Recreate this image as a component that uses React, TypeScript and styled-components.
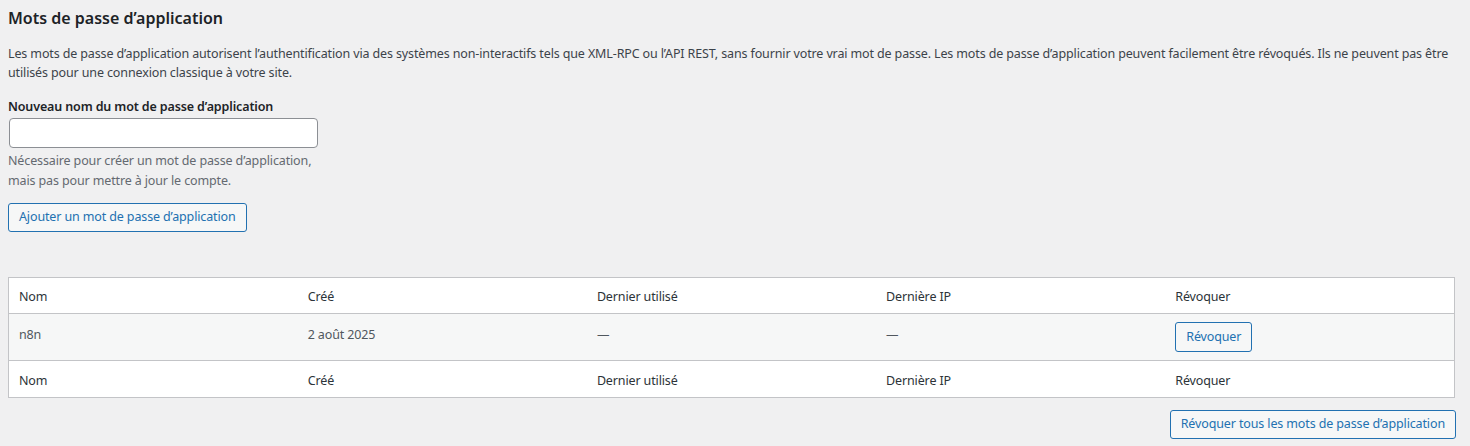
import styled, { createGlobalStyle } from "styled-components";

const GlobalStyle = createGlobalStyle`
    html, body {
        margin: 0;
        padding: 0;
        background-color: #f0f0f1;
    }
    body {
        font-family: "Noto Sans", "Liberation Sans", sans-serif;
        font-size: 12.5px;
        letter-spacing: -0.13px;
        color: #3c434a;
    }
`;

const Section = styled.div`
    padding: 6px 15px 8px 8px;
`;

const Title = styled.h2`
    margin: 0;
    font-size: 16px;
    line-height: 24px;
    font-weight: 600;
    letter-spacing: 0;
    color: #1d2327;
`;

const Intro = styled.p`
    margin: 15px 0 0;
    line-height: 18.5px;
    white-space: nowrap;
`;

const Field = styled.div`
    margin-top: 15px;
    display: flex;
    flex-direction: column;
    align-items: flex-start;
`;

const Label = styled.label`
    font-weight: 600;
    line-height: 19px;
    color: #1d2327;
`;

const TextInput = styled.input`
    box-sizing: border-box;
    margin: 2px 0 0 1px;
    width: 309px;
    height: 30px;
    border: 1px solid #8c8f94;
    border-radius: 4px;
    background: #fff;
    font: inherit;
    padding: 0 8px;
`;

const Help = styled.p`
    margin: 3px 0 0;
    line-height: 19.5px;
    color: #646970;
`;

const Button = styled.button<{ $small?: boolean }>`
    box-sizing: border-box;
    height: ${(p) => (p.$small ? "30px" : "29px")};
    padding: 0 10px;
    border: 1px solid #2271b1;
    border-radius: 3px;
    background: #f6f7f7;
    color: #2271b1;
    font: inherit;
    letter-spacing: inherit;
    line-height: 1;
    cursor: pointer;
    white-space: nowrap;
`;

const AddRow = styled.div`
    margin-top: 13px;
`;

const Table = styled.table`
    margin-top: 45px;
    width: 100%;
    table-layout: fixed;
    border-collapse: collapse;
    border: 1px solid #c3c4c7;
    background: #fff;
`;

const HeadRow = styled.tr<{ $foot?: boolean }>`
    border-${(p) => (p.$foot ? "top" : "bottom")}: 1px solid #c3c4c7;
`;

const HeadCell = styled.th<{ $foot?: boolean }>`
    height: ${(p) => (p.$foot ? "34px" : "33px")};
    padding: 2px 10px 0;
    text-align: left;
    font-weight: 400;
    color: #2c3338;
    vertical-align: middle;
`;

const BodyRow = styled.tr`
    background: #f6f7f7;
`;

const Cell = styled.td`
    padding: 8px 10px;
    height: 30px;
    vertical-align: top;
    color: #50575e;
    line-height: 25px;
`;

const Footer = styled.div`
    display: flex;
    justify-content: flex-end;
    margin-top: 12px;
    margin-right: -1px;
`;

const columns = ["Nom", "Créé", "Dernier utilisé", "Dernière IP", "Révoquer"];

function HeaderRow({ foot }: { foot?: boolean }) {
    return (
        <HeadRow $foot={foot}>
            {columns.map((c) => (
                <HeadCell key={c} scope="col" $foot={foot}>{c}</HeadCell>
            ))}
        </HeadRow>
    );
}

export default function App() {
    return (
        <Section>
            <GlobalStyle />
            <Title>Mots de passe d’application</Title>
            <Intro>
                Les mots de passe d’application autorisent l’authentification via des systèmes non-interactifs tels que XML-RPC ou l’API REST, sans fournir votre vrai mot de passe. Les mots de passe d’application peuvent facilement être révoqués. Ils ne peuvent pas être
                <br />
                utilisés pour une connexion classique à votre site.
            </Intro>
            <Field>
                <Label htmlFor="new_application_password_name">Nouveau nom du mot de passe d’application</Label>
                <TextInput id="new_application_password_name" type="text" />
                <Help>
                    Nécessaire pour créer un mot de passe d’application,
                    <br />
                    mais pas pour mettre à jour le compte.
                </Help>
            </Field>
            <AddRow>
                <Button>Ajouter un mot de passe d’application</Button>
            </AddRow>
            <Table>
                <thead>
                    <HeaderRow />
                </thead>
                <tbody>
                    <BodyRow>
                        <Cell>n8n</Cell>
                        <Cell>2 août 2025</Cell>
                        <Cell>—</Cell>
                        <Cell>—</Cell>
                        <Cell>
                            <Button $small>Révoquer</Button>
                        </Cell>
                    </BodyRow>
                </tbody>
                <tfoot>
                    <HeaderRow foot />
                </tfoot>
            </Table>
            <Footer>
                <Button>Révoquer tous les mots de passe d’application</Button>
            </Footer>
        </Section>
    );
}
